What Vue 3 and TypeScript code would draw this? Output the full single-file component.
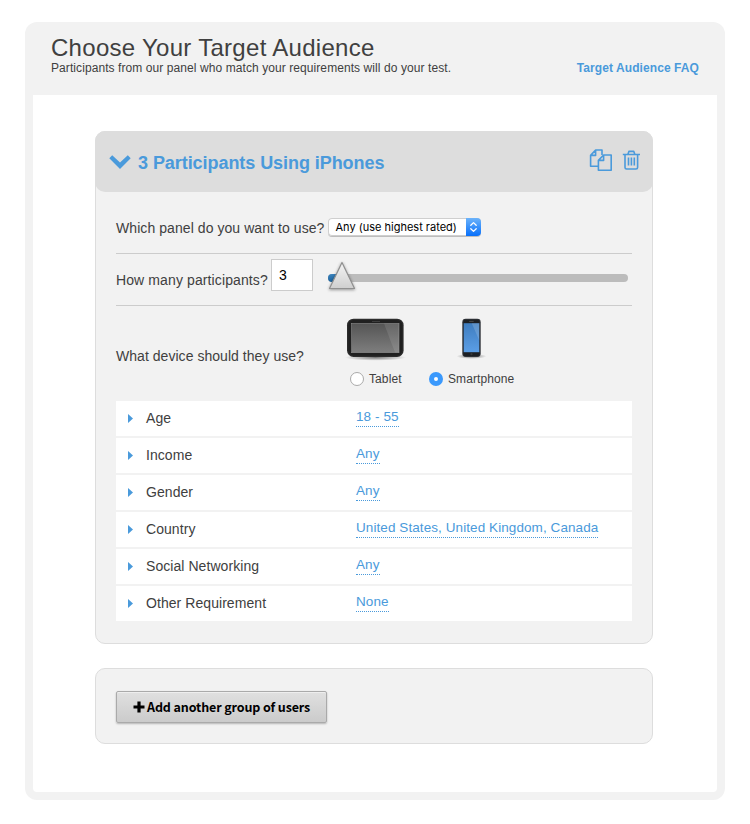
<script setup lang="ts">
import { computed, ref } from 'vue'

interface Requirement {
  label: string
  value: string
}

const participants = ref(3)
const device = ref<'tablet' | 'smartphone'>('smartphone')
const heading = computed(
  () => `${participants.value} Participants Using ${device.value === 'smartphone' ? 'iPhones' : 'Tablets'}`,
)

const requirements: Requirement[] = [
  { label: 'Age', value: '18 - 55' },
  { label: 'Income', value: 'Any' },
  { label: 'Gender', value: 'Any' },
  { label: 'Country', value: 'United States, United Kingdom, Canada' },
  { label: 'Social Networking', value: 'Any' },
  { label: 'Other Requirement', value: 'None' },
]
</script>

<template>
  <main class="panel">
    <header class="panel-head">
      <div>
        <h1>Choose Your Target Audience</h1>
        <p>Participants from our panel who match your requirements will do your test.</p>
      </div>
      <a class="faq">Target Audience FAQ</a>
    </header>

    <div class="panel-body">
      <section class="card">
        <div class="card-head">
          <svg class="chevron" width="22" height="14" viewBox="0 0 22 14">
            <path d="M.3 3.2L3.2 .3L11 7.4L18.8 .3L21.7 3.2L11 13.9Z" fill="#4a9adb" />
          </svg>
          <h2>{{ heading }}</h2>
          <svg class="copy" width="24" height="24" viewBox="0 0 24 24" fill="none" stroke="#4a9adb" stroke-width="1.6" stroke-linejoin="round">
            <path d="M10 18.2H2.6V7.4L7.6 2H14V7M7.6 2V7.4H2.6" />
            <path d="M15.6 7H23.2V22.2H10.4V12.4ZM15.6 7V12.4H10.4" />
          </svg>
          <svg class="trash" width="18" height="20" viewBox="0 0 18 20" fill="none" stroke="#4a9adb" stroke-width="1.6" stroke-linejoin="round">
            <path d="M.8 4.5H18M3 4.5V17.4Q3 19 4.6 19H14Q15.6 19 15.6 17.4V4.5M5.9 4.2L6.9 1.4H11.8L12.8 4.2" />
            <path d="M6.5 7.6V15.6M9.4 7.6V15.6M12.3 7.6V15.6" />
          </svg>
        </div>

        <div class="card-body">
          <div class="row row-panel">
            <label class="q1">Which panel do you want to use?</label>
            <div class="select">
              <span class="select-text">Any (use highest rated)</span>
              <span class="select-arrows">
                <svg width="15" height="18" viewBox="0 0 15 18" fill="none" stroke="#fff" stroke-width="1.3" stroke-linecap="round" stroke-linejoin="round">
                  <path d="M4.8 7.2L7.5 4.6L10.2 7.2M4.8 10.8L7.5 13.4L10.2 10.8" />
                </svg>
              </span>
            </div>
          </div>

          <div class="row row-count">
            <label class="q2">How many participants?</label>
            <div class="count">{{ participants }}</div>
            <div class="slider">
              <div class="fill"></div>
              <svg class="thumb" width="34" height="36" viewBox="0 0 34 36">
                <defs>
                  <linearGradient id="thumbFill" x1="0" y1="0" x2="0" y2="1">
                    <stop offset="0" stop-color="#f4f4f4" />
                    <stop offset="1" stop-color="#cfcfcf" />
                  </linearGradient>
                </defs>
                <path d="M17 3.5L29.5 29.5H4.5Z" fill="url(#thumbFill)" stroke="#909090" stroke-width="1.2" stroke-linejoin="round" />
              </svg>
            </div>
          </div>

          <div class="row-device">
            <label class="q3">What device should they use?</label>
            <div class="option tablet">
              <svg width="62" height="46" viewBox="0 0 62 46">
                <defs>
                  <linearGradient id="tabletScreen" x1="0" y1="0" x2="0" y2="1">
                    <stop offset="0" stop-color="#555" />
                    <stop offset="1" stop-color="#7e7e7e" />
                  </linearGradient>
                  <radialGradient id="groundShade">
                    <stop offset="0" stop-color="#000" stop-opacity=".5" />
                    <stop offset="1" stop-color="#000" stop-opacity="0" />
                  </radialGradient>
                </defs>
                <ellipse cx="31.5" cy="40.5" rx="30.5" ry="3.2" fill="url(#groundShade)" />
                <rect x="3" y="1.7" width="56.6" height="38.3" rx="6.5" fill="#2c2c2c" />
                <rect x="4.3" y="3" width="54" height="35.7" rx="5.5" fill="#202020" />
                <path d="M28 4.5H36" stroke="#3c3c3c" stroke-width="1" />
                <rect x="7.6" y="6.5" width="47.4" height="29.2" fill="url(#tabletScreen)" stroke="#8c8c8c" stroke-width=".6" />
                <path d="M40 6.5H55V35.5H51Z" fill="#fff" opacity=".1" />
              </svg>
              <div class="radio-line">
                <span class="radio" :class="{ on: device === 'tablet' }"></span><span>Tablet</span>
              </div>
            </div>
            <div class="option phone">
              <svg width="40" height="46" viewBox="0 0 40 46">
                <defs>
                  <linearGradient id="phoneScreen" x1="0" y1="0" x2="0" y2="1">
                    <stop offset="0" stop-color="#3f7dbf" />
                    <stop offset="1" stop-color="#5b9ee6" />
                  </linearGradient>
                </defs>
                <ellipse cx="20.5" cy="39.3" rx="15" ry="2.6" fill="url(#groundShade)" />
                <rect x="11.3" y="1.8" width="18.4" height="38.2" rx="3.4" fill="#303338" />
                <rect x="12.3" y="2.8" width="16.4" height="36.2" rx="2.6" fill="#1d2024" />
                <path d="M18.2 4.4H22.7" stroke="#555" stroke-width=".8" />
                <rect x="12.7" y="6.2" width="15.6" height="29" fill="url(#phoneScreen)" />
                <path d="M20.7 6.2H28.3V23.6Z" fill="#fff" opacity=".16" />
                <circle cx="20.5" cy="37.2" r="1.1" fill="#393939" />
              </svg>
              <div class="radio-line">
                <span class="radio" :class="{ on: device === 'smartphone' }"></span><span>Smartphone</span>
              </div>
            </div>
          </div>

          <ul class="requirements">
            <li v-for="item in requirements" :key="item.label">
              <i class="caret"></i>
              <span class="name">{{ item.label }}</span>
              <a class="value">{{ item.value }}</a>
            </li>
          </ul>
        </div>
      </section>

      <section class="card add-card">
        <button class="add" type="button">
          <svg width="12" height="12" viewBox="0 0 12 12"><path d="M6 .5V11.5M.5 6H11.5" stroke="#000" stroke-width="3.2" /></svg>
          <span>Add another group of users</span>
        </button>
      </section>
    </div>
  </main>
</template>

<style>
body {
  background: #fff;
}
</style>

<style scoped>
* {
  box-sizing: border-box;
  margin: 0;
  padding: 0;
}
.panel {
  width: 700px;
  height: 778px;
  margin: 22px 0 0 25px;
  padding: 0 8px 8px;
  background: #f2f2f2;
  border-radius: 12px;
  font-family: 'Liberation Sans', Arial, sans-serif;
  color: #404040;
  white-space: nowrap;
  display: flex;
  flex-direction: column;
}
.panel-head {
  height: 73px;
  padding: 13px 18px 0;
  display: flex;
  justify-content: space-between;
}
h1 {
  font-size: 24px;
  font-weight: 400;
  line-height: 26px;
  letter-spacing: 0.29px;
}
.panel-head p {
  font-size: 12px;
  line-height: 14px;
  letter-spacing: 0.08px;
}
.faq {
  margin-top: 26px;
  font-size: 12px;
  font-weight: 700;
  line-height: 14px;
  letter-spacing: 0.08px;
  color: #4a9adb;
}
.panel-body {
  flex: 1;
  padding: 36px 64px 0 62px;
  background: #fff;
  border-radius: 0 0 4px 4px;
}
.card {
  width: 558px;
  height: 513px;
  background: #f2f2f2;
  border: 1px solid #ddd;
  border-radius: 10px;
}
.card-head {
  height: 61px;
  margin: -1px -1px 0;
  padding: 0 13px 0 14px;
  display: flex;
  align-items: center;
  background: #ddd;
  border-radius: 10px;
}
.chevron {
  margin-top: 1px;
}
h2 {
  margin: 2px auto 0 7px;
  font-size: 18px;
  line-height: 22px;
  letter-spacing: -0.06px;
  color: #4a9adb;
}
.copy {
  margin: -3px 10px 0 0;
}
.trash {
  margin-top: -3px;
}
.card-body {
  padding: 0 20px;
}
.row {
  display: flex;
  border-bottom: 1px solid #ccc;
  font-size: 14px;
  line-height: 16px;
}
.row-panel {
  height: 62px;
  padding-top: 26px;
}
.row-panel label {
  width: 212px;
  margin-top: 2px;
  letter-spacing: 0.07px;
}
.select {
  width: 153px;
  height: 18px;
  display: flex;
  justify-content: space-between;
  background: #fff;
  border-radius: 4px;
  box-shadow: inset 0 0 0 1px #cfcfcf, 0 1px 0 #bdbdbd;
  overflow: hidden;
}
.select-text {
  padding-left: 7.5px;
  font-family: Inter, sans-serif;
  font-size: 11px;
  line-height: 18px;
  color: #000;
}
.select-arrows {
  width: 15px;
  height: 18px;
  background: linear-gradient(#6cb3fa, #0870fb);
}
.row-count {
  height: 52px;
  padding-top: 5px;
}
.row-count label {
  width: 155px;
  margin-top: 13px;
  letter-spacing: 0.11px;
}
.count {
  width: 42px;
  height: 32px;
  padding-left: 7px;
  border: 1px solid #ccc;
  background: #fff;
  color: #000;
  line-height: 31px;
}
.slider {
  position: relative;
  width: 300px;
  height: 8px;
  margin: 15px 0 0 15px;
  border-radius: 4px;
  background: #bcbcbc;
}
.fill {
  width: 14px;
  height: 8px;
  border-radius: 4px 0 0 4px;
  background: linear-gradient(#3b83bd, #1b629d);
}
.thumb {
  position: absolute;
  left: -3px;
  top: -15px;
  filter: drop-shadow(0 1px 1.5px rgba(0, 0, 0, 0.4));
}
.row-device {
  height: 95px;
  padding-top: 11px;
  display: flex;
  font-size: 14px;
}
.row-device label {
  width: 228px;
  padding-top: 31px;
  line-height: 16px;
  letter-spacing: 0.04px;
}
.option {
  display: flex;
  flex-direction: column;
  align-items: flex-start;
}
.option svg {
  margin-bottom: 9px;
}
.tablet {
  width: 85px;
}
.phone > svg {
  margin-left: 22px;
}
.radio-line {
  display: flex;
  align-items: center;
  gap: 5px;
  height: 14px;
  padding-left: 6px;
  font-size: 12px;
  line-height: 14px;
  letter-spacing: 0.1px;
}
.phone .radio-line {
  padding-left: 0;
}
.radio {
  width: 14px;
  height: 14px;
  border-radius: 50%;
  background: #fff;
  border: 1px solid #aaa;
}
.radio.on {
  border: 5px solid #3b99fc;
}
.requirements {
  list-style: none;
  display: flex;
  flex-direction: column;
  gap: 2px;
}
.requirements li {
  height: 35px;
  padding-left: 12px;
  display: flex;
  background: #fff;
  font-size: 14px;
}
.caret {
  width: 5px;
  height: 9px;
  margin-top: 13px;
  background: #4a9adb;
  clip-path: polygon(0 0, 100% 50%, 0 100%);
}
.name {
  width: 210px;
  margin-left: 13px;
  line-height: 34px;
  letter-spacing: 0.06px;
}
.value {
  align-self: flex-start;
  margin-top: 8px;
  height: 18px;
  border-bottom: 1px dotted #4a9adb;
  font-size: 13.5px;
  line-height: 15px;
  letter-spacing: 0.08px;
  color: #4a9adb;
}
.add-card {
  height: 76px;
  margin-top: 24px;
  padding: 22px 20px;
}
.add {
  width: 211px;
  height: 32px;
  padding-left: 16px;
  display: flex;
  align-items: center;
  gap: 2px;
  border: 1px solid #aaa;
  border-radius: 2px;
  background: linear-gradient(#e0e0e0, #cbcbcb);
  box-shadow: inset 0 1px 0 #eee, 0 1px 2px rgba(0, 0, 0, 0.25);
  font-family: 'Noto Sans CJK SC', sans-serif;
  font-size: 12.5px;
  font-weight: 700;
  line-height: 30px;
  letter-spacing: -0.12px;
  color: #000;
}
.add svg {
  margin-top: -1px;
}
</style>
